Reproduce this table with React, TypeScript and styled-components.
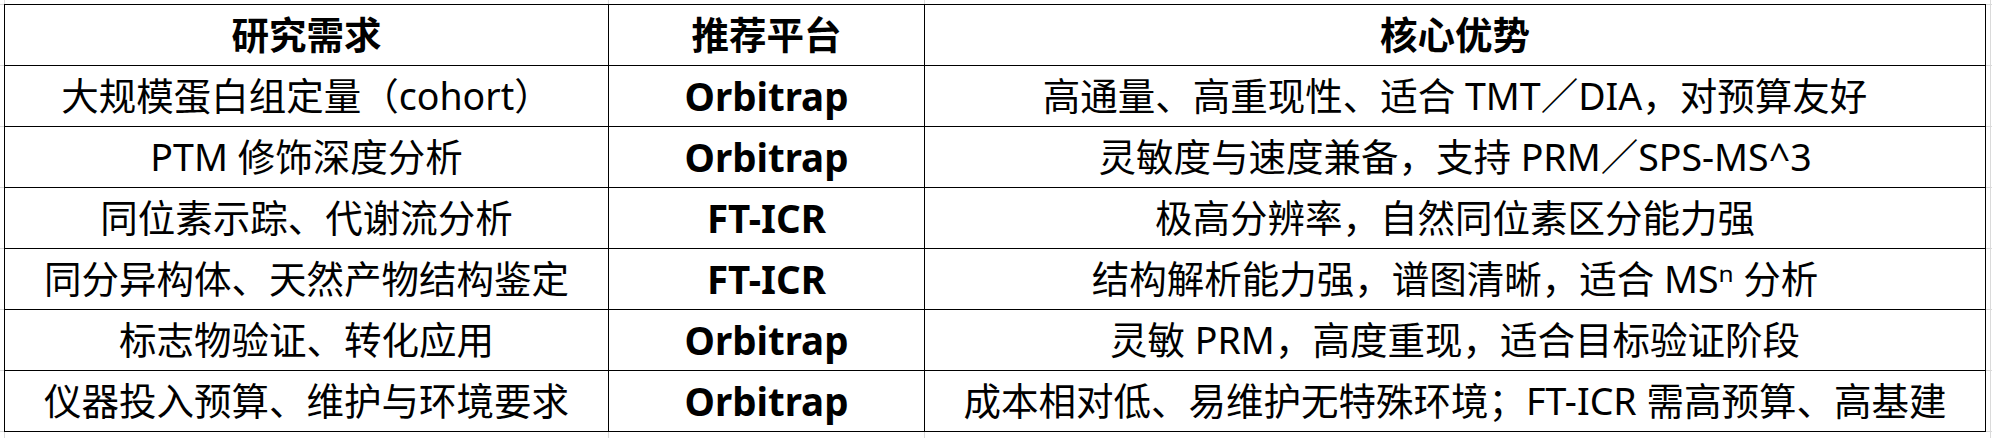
import styled, { createGlobalStyle } from "styled-components";

const GlobalStyle = createGlobalStyle`
  html, body {
    margin: 0;
    padding: 0;
    background: #ffffff;
  }
  body {
    font-family: "Noto Sans", "Noto Sans CJK SC", sans-serif;
    color: #000000;
  }
`;

// faint spreadsheet gridlines around the bordered table
const Page = styled.div`
  height: 438px;
  padding: 4px 0 0 4px;
  box-sizing: border-box;
  background-color: #fff;
  background-image:
    repeating-linear-gradient(
      to bottom,
      transparent 0,
      transparent 4px,
      #dadada 4px,
      #dadada 5px,
      transparent 5px,
      transparent 61px
    ),
    linear-gradient(to right, transparent 4px, #dadada 4px, #dadada 5px, transparent 5px),
    linear-gradient(to right, transparent 608px, #dadada 608px, #dadada 609px, transparent 609px),
    linear-gradient(to right, transparent 924px, #dadada 924px, #dadada 925px, transparent 925px),
    linear-gradient(to right, transparent 1990px, #dadada 1990px, #dadada 1991px, transparent 1991px);
`;

const Table = styled.table`
  width: 1981px;
  border-collapse: collapse;
  table-layout: fixed;
  background: #fff;
`;

const Col = styled.col<{ $w: number }>`
  width: ${(p) => p.$w}px;
`;

const HeadCell = styled.th`
  height: 60px;
  padding: 0;
  border: 1.5px solid #000;
  font-size: 37.5px;
  font-weight: 700;
  text-align: center;
  vertical-align: middle;
  line-height: 1;
`;

const Cell = styled.td<{ $bold?: boolean }>`
  height: 60px;
  padding: 0;
  border: 1.5px solid #000;
  font-size: ${(p) => (p.$bold ? "38.5px" : "37.5px")};
  font-weight: ${(p) => (p.$bold ? 700 : 400)};
  text-align: center;
  vertical-align: middle;
  line-height: 1;
  white-space: nowrap;
`;

const rows = [
  ["大规模蛋白组定量（cohort）", "Orbitrap", "高通量、高重现性、适合 TMT／DIA，对预算友好"],
  ["PTM 修饰深度分析", "Orbitrap", "灵敏度与速度兼备，支持 PRM／SPS-MS^3"],
  ["同位素示踪、代谢流分析", "FT-ICR", "极高分辨率，自然同位素区分能力强"],
  ["同分异构体、天然产物结构鉴定", "FT-ICR", "结构解析能力强，谱图清晰，适合 MSⁿ 分析"],
  ["标志物验证、转化应用", "Orbitrap", "灵敏 PRM，高度重现，适合目标验证阶段"],
  ["仪器投入预算、维护与环境要求", "Orbitrap", "成本相对低、易维护无特殊环境；FT-ICR 需高预算、高基建"],
];

export default function App() {
  return (
    <>
      <GlobalStyle />
      <Page>
        <Table>
          <colgroup>
            <Col $w={604} />
            <Col $w={316} />
            <Col $w={1061} />
          </colgroup>
          <thead>
            <tr>
              <HeadCell>研究需求</HeadCell>
              <HeadCell>推荐平台</HeadCell>
              <HeadCell>核心优势</HeadCell>
            </tr>
          </thead>
          <tbody>
            {rows.map((r) => (
              <tr key={r[0]}>
                <Cell>{r[0]}</Cell>
                <Cell $bold>{r[1]}</Cell>
                <Cell>{r[2]}</Cell>
              </tr>
            ))}
          </tbody>
        </Table>
      </Page>
    </>
  );
}
